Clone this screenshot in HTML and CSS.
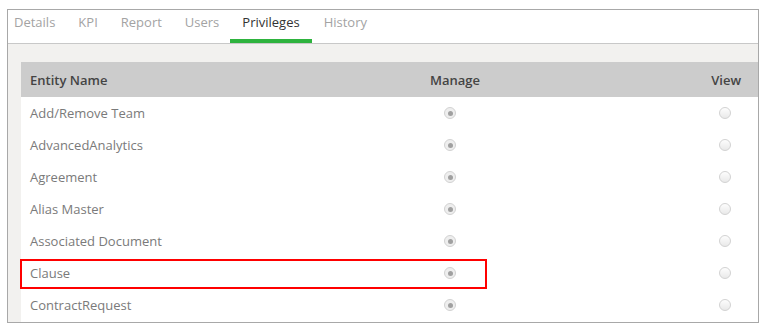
FILE: index.html
```html
<!DOCTYPE html>
<html lang="en">
<head>
  <meta charset="UTF-8">
  <title>Privileges</title>
  <link rel="stylesheet" href="styles.css">
</head>
<body>
  <div class="frame">
    <!-- Tabs -->
    <div class="tabs">
      <span class="tab">Details</span>
      <span class="tab">KPI</span>
      <span class="tab">Report</span>
      <span class="tab">Users</span>
      <span class="tab active">Privileges</span>
      <span class="tab">History</span>
    </div>

    <!-- Privileges grid -->
    <div class="panel">
      <div class="grid">
        <div class="row head">
          <div class="name">Entity Name</div>
          <div class="manage">Manage</div>
          <div class="view">View</div>
        </div>
        <div class="row">
          <div class="name">Add/Remove Team</div>
          <div class="manage"><span class="radio on"></span></div>
          <div class="view"><span class="radio"></span></div>
        </div>
        <div class="row">
          <div class="name">AdvancedAnalytics</div>
          <div class="manage"><span class="radio on"></span></div>
          <div class="view"><span class="radio"></span></div>
        </div>
        <div class="row">
          <div class="name">Agreement</div>
          <div class="manage"><span class="radio on"></span></div>
          <div class="view"><span class="radio"></span></div>
        </div>
        <div class="row">
          <div class="name">Alias Master</div>
          <div class="manage"><span class="radio on"></span></div>
          <div class="view"><span class="radio"></span></div>
        </div>
        <div class="row">
          <div class="name">Associated Document</div>
          <div class="manage"><span class="radio on"></span></div>
          <div class="view"><span class="radio"></span></div>
        </div>
        <div class="row marked">
          <div class="name">Clause</div>
          <div class="manage"><span class="radio on"></span></div>
          <div class="view"><span class="radio"></span></div>
          <span class="highlight"></span>
        </div>
        <div class="row">
          <div class="name">ContractRequest</div>
          <div class="manage"><span class="radio on"></span></div>
          <div class="view"><span class="radio"></span></div>
        </div>
      </div>
    </div>
  </div>
</body>
</html>
```

FILE: styles.css
```css
* {
  box-sizing: border-box;
  font-family: "Open Sans", "Noto Sans", sans-serif;
}

body {
  margin: 0;
  background: white;
}

.frame {
  margin: 9px 0 0 7px;
  width: 752px;
  height: 314px;
  border: 1px solid #a8a8a8;
  overflow: hidden;
  display: flex;
  flex-direction: column;
}

.tabs {
  height: 34px;
  display: flex;
  padding-left: 6px;
  border-bottom: 1px solid #c8c8c8;
  background: white;
}

.tab {
  position: relative;
  padding: 0 12px 0 0;
  margin-right: 11px;
  font-size: 13px;
  color: #a3a3a3;
  line-height: 25px;
}

.tab.active {
  color: #333;
  padding: 0 12px;
  margin-left: -12px;
  margin-right: 12px;
}

.tab.active::after {
  content: "";
  position: absolute;
  left: 0;
  right: 0;
  bottom: 0;
  height: 4px;
  background: #2eb33e;
}

.panel {
  flex: 1;
  background: #f2f1ef;
  padding: 18px 0 0 13px;
}

.grid {
  background: white;
  height: 100%;
}

.row {
  position: relative;
  display: flex;
  align-items: center;
  height: 32px;
  font-size: 13px;
  color: #7a7a7a;
}

.row.head {
  height: 35px;
  background: #cccccc;
  color: #444;
  font-weight: 600;
}

.name {
  width: 359px;
  padding-left: 9px;
}

.manage {
  width: 150px;
  display: flex;
  justify-content: center;
}

.manage .radio {
  margin-right: 10px;
}

.view {
  flex: 1;
  display: flex;
  justify-content: flex-end;
  padding-right: 17px;
}

.view .radio {
  margin-right: 10px;
}

.radio {
  width: 12px;
  height: 12px;
  border-radius: 50%;
  border: 1px solid #d2d2d2;
  background: linear-gradient(#fdfdfd, #e9e9e9);
  display: flex;
  align-items: center;
  justify-content: center;
}

.radio.on {
  background: #eeeeee;
}

.radio.on::after {
  content: "";
  width: 5px;
  height: 5px;
  border-radius: 50%;
  background: #a0a0a0;
}

.highlight {
  position: absolute;
  left: -1px;
  top: 2px;
  width: 467px;
  height: 30px;
  border: 2px solid #f00;
}
```
